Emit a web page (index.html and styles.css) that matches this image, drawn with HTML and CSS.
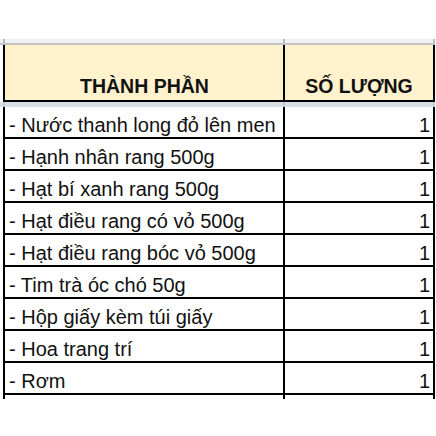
FILE: index.html
```html
<!DOCTYPE html>
<html lang="vi">
<head>
<meta charset="utf-8">
<link rel="stylesheet" href="styles.css">
</head>
<body>
<div class="sheet">
  <div class="band band-top">
    <div class="bcell bcell-a"></div>
    <div class="bcell bcell-b"></div>
  </div>
  <div class="row head">
    <div class="cell a">THÀNH PHẦN</div>
    <div class="cell b">SỐ LƯỢNG</div>
  </div>
  <div class="band band-freeze">
    <div class="bcell bcell-a"></div>
    <div class="bcell bcell-b"></div>
  </div>
  <div class="row"><div class="cell a">- Nước thanh long đỏ lên men</div><div class="cell b">1</div></div>
  <div class="row"><div class="cell a">- Hạnh nhân rang 500g</div><div class="cell b">1</div></div>
  <div class="row"><div class="cell a">- Hạt bí xanh rang 500g</div><div class="cell b">1</div></div>
  <div class="row"><div class="cell a">- Hạt điều rang có vỏ 500g</div><div class="cell b">1</div></div>
  <div class="row"><div class="cell a">- Hạt điều rang bóc vỏ 500g</div><div class="cell b">1</div></div>
  <div class="row"><div class="cell a">- Tim trà óc chó 50g</div><div class="cell b">1</div></div>
  <div class="row"><div class="cell a">- Hộp giấy kèm túi giấy</div><div class="cell b">1</div></div>
  <div class="row"><div class="cell a">- Hoa trang trí</div><div class="cell b">1</div></div>
  <div class="row"><div class="cell a">- Rơm</div><div class="cell b">1</div></div>
  <div class="row stub"><div class="cell a"></div><div class="cell b"></div></div>
</div>
</body>
</html>
```

FILE: styles.css
```css
html, body {
  margin: 0;
  padding: 0;
  background: #ffffff;
}

body {
  font-family: "Liberation Sans", Arial, sans-serif;
  color: #000;
}

.sheet {
  width: 436px;
  padding-top: 39px;
}

.band {
  display: grid;
  grid-template-columns: 3px 280px 152px;
  grid-template-areas: ". a b";
}

.band-top {
  height: 4px;
  background: #eef0f4;
  border-bottom: 2px solid #c4c4c4;
  width: 435px;
}

.band-freeze {
  height: 5px;
  background: #dadee5;
  width: 435px;
}

.bcell-a {
  grid-area: a;
  border-left: 2px solid #b9bcc2;
}

.bcell-b {
  grid-area: b;
  border-left: 2px solid #b9bcc2;
  border-right: 2px solid #b9bcc2;
}

.band-freeze .bcell-a,
.band-freeze .bcell-b {
  border-color: #c3c7ce;
}

.row {
  display: grid;
  grid-template-columns: 280px 152px;
  margin-left: 3px;
}

.cell {
  box-sizing: border-box;
  height: 32px;
  border-bottom: 2px solid #000;
  border-left: 2px solid #000;
  display: flex;
  align-items: flex-end;
  font-size: 20px;
  line-height: 23px;
  white-space: nowrap;
  overflow: hidden;
  color: #111;
}

.cell.a {
  padding-left: 4px;
}

.cell.b {
  border-right: 2px solid #000;
  justify-content: flex-end;
  padding-right: 3px;
}

.head .cell {
  height: 57px;
  background: #fff2cc;
  font-weight: bold;
  font-size: 19.5px;
  line-height: 22px;
  justify-content: center;
  padding: 0 0 3px 0;
}

.head .cell.a {
  padding-left: 1px;
}

.stub .cell {
  height: 4px;
  border-bottom: none;
}
```
